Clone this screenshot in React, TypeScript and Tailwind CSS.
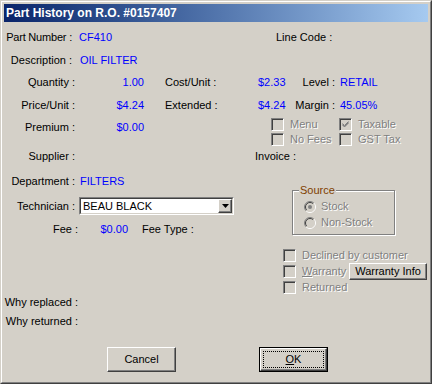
const face = "font-['Liberation_Sans',Arial,sans-serif]";

function Check({ checked }: { checked?: boolean }) {
  return (
    <span className="box-border flex h-[13px] w-[13px] shrink-0 items-center justify-center border border-t-[#808080] border-l-[#808080] border-r-white border-b-white bg-[#d4d0c8] shadow-[inset_1px_1px_0_#404040,inset_-1px_-1px_0_#d4d0c8]">
      {checked && (
        <svg width="7" height="7" viewBox="0 0 7 7">
          <path d="M0.5 2.5 L2.5 4.5 L6.5 0.5 M0.5 3.5 L2.5 5.5 L6.5 1.5 M0.5 4 L2.5 6 L6.5 2" stroke="#808080" strokeWidth="1" fill="none" />
        </svg>
      )}
    </span>
  );
}

function Radio({ on }: { on?: boolean }) {
  return (
    <svg width="12" height="12" viewBox="0 0 12 12" className="shrink-0">
      <circle cx="6" cy="6" r="4.5" fill="#d4d0c8" />
      <path d="M9.9 2.1 A5.5 5.5 0 0 0 2.1 9.9" stroke="#808080" fill="none" />
      <path d="M2.1 9.9 A5.5 5.5 0 0 0 9.9 2.1" stroke="#ffffff" fill="none" />
      <path d="M9.2 2.8 A4.5 4.5 0 0 0 2.8 9.2" stroke="#404040" fill="none" />
      <path d="M2.8 9.2 A4.5 4.5 0 0 0 9.2 2.8" stroke="#d4d0c8" fill="none" />
      {on && <circle cx="6" cy="6" r="2" fill="#808080" />}
    </svg>
  );
}

const dim = "text-[#808080] [text-shadow:1px_1px_0_#fff]";
const blue = "text-[#0000ff]";
const raised =
  "border border-t-white border-l-white border-r-[#404040] border-b-[#404040] shadow-[inset_-1px_-1px_0_#808080] bg-[#d4d0c8]";

export default function App() {
  return (
    <div className={`${face} h-[384px] w-[432px] whitespace-nowrap border border-t-[#d4d0c8] border-l-[#d4d0c8] border-r-[#404040] border-b-[#404040] bg-[#d4d0c8] text-[11px] leading-[13px] text-black`}>
      <div className="flex h-full flex-col border border-t-white border-l-white border-r-[#808080] border-b-[#808080] p-[2px]">
        <div className="flex h-[18px] shrink-0 items-center bg-gradient-to-r from-[#0a246a] to-[#a6caf0] pl-[2px] text-[12px] font-bold text-white">
          Part History on R.O. #0157407
        </div>

        <div className="flex flex-col">
          <div className="mt-[9px] flex h-[13px]">
            <span className="flex w-[68px] justify-end tracking-[-0.2px]">Part Number :</span>
            <span className={`ml-[7px] w-[197px] ${blue}`}>CF410</span>
            <span>Line Code :</span>
          </div>

          <div className="mt-[10px] flex h-[13px]">
            <span className="w-[68px] text-right">Description :</span>
            <span className={`ml-[8px] ${blue}`}>OIL FILTER</span>
          </div>

          <div className="mt-[9px] flex h-[13px]">
            <span className="w-[71px] text-right">Quantity :</span>
            <span className={`w-[69px] text-right ${blue}`}>1.00</span>
            <span className="ml-[21px] w-[93px]">Cost/Unit :</span>
            <span className={`w-[26px] ${blue}`}>$2.33</span>
            <span className="w-[51px] text-right">Level :</span>
            <span className={`ml-[5px] ${blue}`}>RETAIL</span>
          </div>

          <div className="mt-[10px] flex h-[13px]">
            <span className="w-[71px] text-right">Price/Unit :</span>
            <span className={`w-[69px] text-right ${blue}`}>$4.24</span>
            <span className="ml-[21px] w-[93px]">Extended :</span>
            <span className={`w-[26px] ${blue}`}>$4.24</span>
            <span className="w-[51px] text-right">Margin :</span>
            <span className={`ml-[5px] ${blue}`}>45.05%</span>
          </div>

          <div className="mt-[6px] flex items-start">
            <div className="mt-[3px] flex h-[13px]">
              <span className="w-[71px] text-right">Premium :</span>
              <span className={`w-[69px] text-right ${blue}`}>$0.00</span>
            </div>
            <div className="ml-[127px] grid grid-cols-[68px_auto] gap-y-[2px]">
              <label className="flex h-[13px] items-center gap-[6px]">
                <Check />
                <span className={dim}>Menu</span>
              </label>
              <label className="flex h-[13px] items-center gap-[6px]">
                <Check checked />
                <span className={dim}>Taxable</span>
              </label>
              <label className="flex h-[13px] items-center gap-[6px]">
                <Check />
                <span className={dim}>No Fees</span>
              </label>
              <label className="flex h-[13px] items-center gap-[6px]">
                <Check />
                <span className={dim}>GST Tax</span>
              </label>
            </div>
          </div>

          <div className="mt-[4px] flex h-[13px]">
            <span className="w-[71px] text-right">Supplier :</span>
            <span className="ml-[180px]">Invoice :</span>
          </div>

          <div className="mt-[12px] flex items-start">
            <div className="flex w-[279px] flex-col">
              <div className="flex h-[13px]">
                <span className="w-[71px] text-right">Department :</span>
                <span className={`ml-[5px] ${blue}`}>FILTERS</span>
              </div>
              <div className="mt-[9px] flex h-[18px] items-center">
                <span className="w-[71px] text-right">Technician :</span>
                <div className="ml-[4px] flex h-[18px] w-[155px] border border-t-[#808080] border-l-[#808080] border-r-white border-b-white">
                  <div className="flex flex-1 items-center border border-t-[#404040] border-l-[#404040] border-r-[#d4d0c8] border-b-[#d4d0c8] bg-white">
                    <span className="flex-1 pl-[2px]">BEAU BLACK</span>
                    <div className={`flex h-full w-[14px] items-center justify-center ${raised}`}>
                      <svg width="7" height="4" viewBox="0 0 7 4">
                        <path d="M0 0 H7 L3.5 4 Z" fill="#000" />
                      </svg>
                    </div>
                  </div>
                </div>
              </div>
              <div className="mt-[8px] flex h-[13px]">
                <span className="w-[74px] text-right">Fee :</span>
                <span className={`w-[50px] text-right ${blue}`}>$0.00</span>
                <span className="ml-[14px]">Fee Type :</span>
              </div>
            </div>

            <div className="flex flex-col">
              <div className="relative ml-[9px] mt-[15px] h-[45px] w-[103px] border border-[#808080] shadow-[inset_1px_1px_0_#fff,1px_1px_0_#fff]">
                <span className="absolute -top-[7px] left-[6px] bg-[#d4d0c8] px-[1px] text-[#804000]">Source</span>
                <div className="flex flex-col gap-[3px] pl-[11px] pt-[9px]">
                  <div className="flex h-[13px] items-center gap-[5px]">
                    <Radio on />
                    <span className={dim}>Stock</span>
                  </div>
                  <div className="flex h-[13px] items-center gap-[5px]">
                    <Radio />
                    <span className={dim}>Non-Stock</span>
                  </div>
                </div>
              </div>

              <div className="mt-[14px] flex flex-col gap-[3px]">
                <div className="flex h-[13px] items-center gap-[6px]">
                  <Check />
                  <span className={dim}>Declined by customer</span>
                </div>
                <div className="flex h-[13px] items-center">
                  <Check />
                  <span className={`ml-[6px] w-[47px] ${dim}`}>
                    <u>W</u>arranty
                  </span>
                  <button className={`flex h-[17px] w-[78px] shrink-0 items-center justify-center ${raised}`}>
                    Warranty Info
                  </button>
                </div>
                <div className="flex h-[13px] items-center gap-[6px]">
                  <Check />
                  <span className={dim}>Returned</span>
                </div>
              </div>
            </div>
          </div>

          <div className="mt-[2px] flex h-[13px]">
            <span className="w-[74px] text-right">Why replaced :</span>
          </div>
          <div className="mt-[6px] flex h-[13px]">
            <span className="w-[74px] text-right">Why returned :</span>
          </div>

          <div className="mt-[19px] flex">
            <button className={`ml-[103px] flex h-[25px] w-[69px] items-center justify-center ${raised}`}>
              Cancel
            </button>
            <div className="ml-[83px] flex h-[25px] w-[69px] border border-black">
              <div className={`flex flex-1 ${raised}`}>
                <div className="m-[2px] flex flex-1 items-center justify-center border border-dotted border-black">
                  <span>
                    <u>O</u>K
                  </span>
                </div>
              </div>
            </div>
          </div>
        </div>
      </div>
    </div>
  );
}
